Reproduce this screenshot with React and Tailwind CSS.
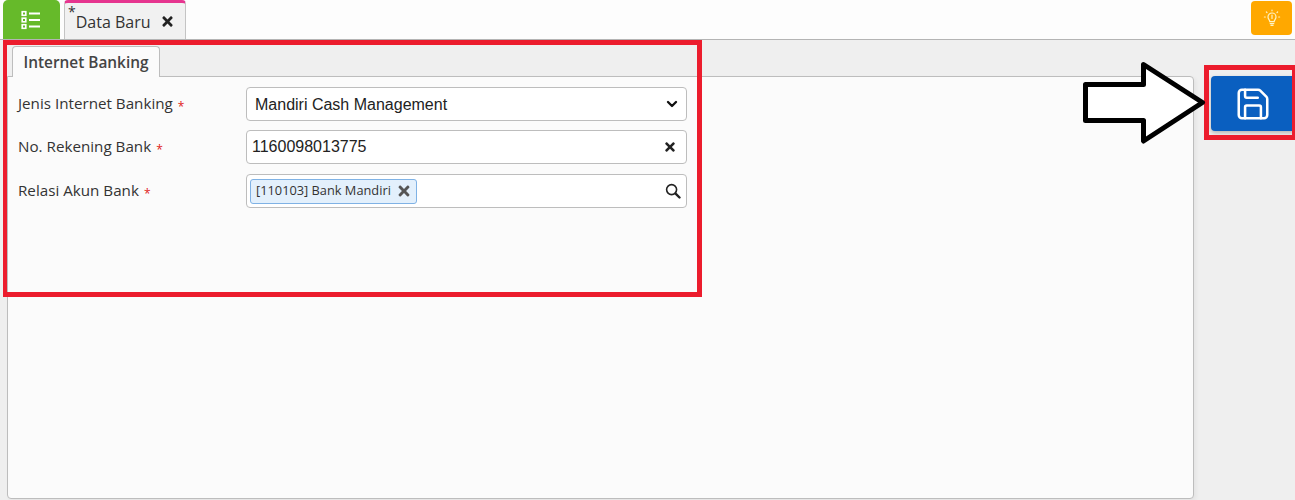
import React from 'react';
import { Save, ChevronDown } from 'lucide-react';
import { FaTimes } from 'react-icons/fa';

function ListIcon() {
    return (
        <svg width="20" height="20" viewBox="0 0 20 20" fill="none" stroke="#ffffff">
            <rect x="1.2" y="1.7" width="3.6" height="3.6" strokeWidth="1.6" />
            <rect x="1.2" y="8.2" width="3.6" height="3.6" strokeWidth="1.6" />
            <rect x="1.2" y="14.7" width="3.6" height="3.6" strokeWidth="1.6" />
            <path d="M8 3.5h11M8 10h11M8 16.5h11" strokeWidth="1.8" />
        </svg>
    );
}

function BulbIcon() {
    return (
        <svg width="18" height="18" viewBox="0 0 18 18" fill="none" stroke="#fff3c4" strokeWidth="1.2" strokeLinecap="round">
            <path d="M6.8 12.6c0-1.7-1.8-2.4-1.8-4.6a4 4 0 0 1 8 0c0 2.2-1.8 2.9-1.8 4.6Z" />
            <path d="M7.2 14.6h3.6M8 16.4h2" />
            <path d="M9 6v3.5" />
            <path d="M9 1v.8M3.4 3l.6.6M14.6 3l-.6.6M1.4 8h.9M15.7 8h.9" />
        </svg>
    );
}

function SearchIcon() {
    return (
        <svg width="16" height="16" viewBox="0 0 16 16" fill="none" stroke="#222222" strokeLinecap="round">
            <circle cx="6.6" cy="6.6" r="5" strokeWidth="1.6" />
            <path d="M10.6 10.6l3.9 3.9" strokeWidth="2.4" />
        </svg>
    );
}

function Label({ children }) {
    return (
        <div className="w-[228px] shrink-0 pb-[2px] text-[15.2px] text-[#333333]">
            {children}
            <span className="ml-[5px] inline-block translate-y-[2px] text-[12px] text-[#e02020]">*</span>
        </div>
    );
}

function Field({ children }) {
    return (
        <div className="flex h-[34px] w-[441px] items-center rounded-[4px] border border-[#bdbdbd] bg-white">
            {children}
        </div>
    );
}

export default function App() {
    return (
        <div className="relative flex h-[500px] flex-col overflow-hidden bg-[#efefef] font-['Open_Sans',sans-serif]">

            {/* Top bar */}
            <div className="flex h-10 shrink-0 border-b border-[#b4b4b4] bg-[#fdfdfd] pl-[3px] pr-[3px]">
                <button className="flex h-[39px] w-[57px] items-center justify-center rounded-t-[5px] bg-[#66ba2a] pr-[1px]">
                    <ListIcon />
                </button>
                <div className="ml-[4px] flex h-[39px] w-[122px] rounded-t-[4px] border-x border-[#c4c4c4] border-t-[3px] border-t-[#e6358f] bg-[#f1f1f1] pl-[3px] text-[#333333]">
                    <span className="text-[14px] leading-[18px]">*</span>
                    <span className="mt-[9px] text-[16px] leading-5">Data Baru</span>
                    <FaTimes className="ml-[9px] mt-[11px] text-[15px] text-[#222222]" />
                </div>
                <button className="ml-auto mt-[1px] flex h-[34px] w-[41px] items-center justify-center rounded-[4px] bg-[#ffa800]">
                    <BulbIcon />
                </button>
            </div>

            {/* Body */}
            <div className="flex flex-1 pl-[7px]">
                <div className="flex w-[1187px] flex-col pb-[1px]">
                    <div className="flex h-[36px] items-end pl-[5px]">
                        <div className="z-10 -mb-px flex h-[31px] w-[148px] items-center justify-center rounded-t-[4px] border-x border-t border-[#bdbdbd] bg-[#fbfbfb] pt-[1px] text-[15.4px] font-semibold text-[#444444]">
                            Internet Banking
                        </div>
                    </div>
                    <div className="flex flex-1 flex-col gap-[9px] rounded-b-[4px] rounded-tr-[4px] border border-[#bdbdbd] bg-[#fbfbfb] pl-[10px] pt-[10px] shadow-[2px_2px_4px_rgba(0,0,0,0.05)]">
                        <div className="flex items-center">
                            <Label>Jenis Internet Banking</Label>
                            <Field>
                                <span className="pl-2 pt-[1px] font-['Liberation_Sans',sans-serif] text-base text-[#222222]">Mandiri Cash Management</span>
                                <ChevronDown size={16} strokeWidth={3.5} className="ml-auto mr-[6px] text-[#111111]" />
                            </Field>
                        </div>
                        <div className="flex items-center">
                            <Label>No. Rekening Bank</Label>
                            <Field>
                                <span className="pl-[5px] font-['Liberation_Sans',sans-serif] text-base text-[#222222]">1160098013775</span>
                                <FaTimes className="ml-auto mr-[9px] text-[14px] text-[#222222]" />
                            </Field>
                        </div>
                        <div className="mt-[1px] flex items-center">
                            <Label>Relasi Akun Bank</Label>
                            <Field>
                                <div className="ml-[3px] flex h-[25px] w-[167px] items-center rounded-[3px] border border-[#7fb2e5] bg-[#e3f0fc] pl-[5px] text-[12.8px] text-[#333333]">
                                    [110103] Bank Mandiri
                                    <FaTimes className="ml-auto mr-[4px] text-[16px] text-[#555555]" />
                                </div>
                                <span className="ml-auto mr-[5px]"><SearchIcon /></span>
                            </Field>
                        </div>
                    </div>
                </div>

                {/* Save */}
                <button className="ml-[17px] mt-[36px] flex h-[55px] flex-1 items-center justify-center rounded-l-[4px] bg-[#0a5fc0] shadow-[0_2px_4px_rgba(0,0,0,0.25)]">
                    <Save size={38} strokeWidth={1.6} color="#ffffff" />
                </button>
            </div>

            {/* Annotations over the screenshot */}
            <div className="absolute left-[3px] top-[40px] h-[257px] w-[699px] border-[5px] border-l-4 border-[#ec1c2d]" />
            <div className="absolute left-[1204px] top-[65px] h-[75px] w-[91px] border-[5px] border-r-[3px] border-[#ec1c2d]" />
            <svg className="absolute left-[1080px] top-[58px]" width="130" height="90" viewBox="0 0 130 90">
                <path d="M5.5 26.5H63.5V6.5L122.5 44.5L63.5 83V62.5H5.5Z" fill="#ffffff" stroke="#000000" strokeWidth="5" strokeLinejoin="round" />
            </svg>
        </div>
    );
}
